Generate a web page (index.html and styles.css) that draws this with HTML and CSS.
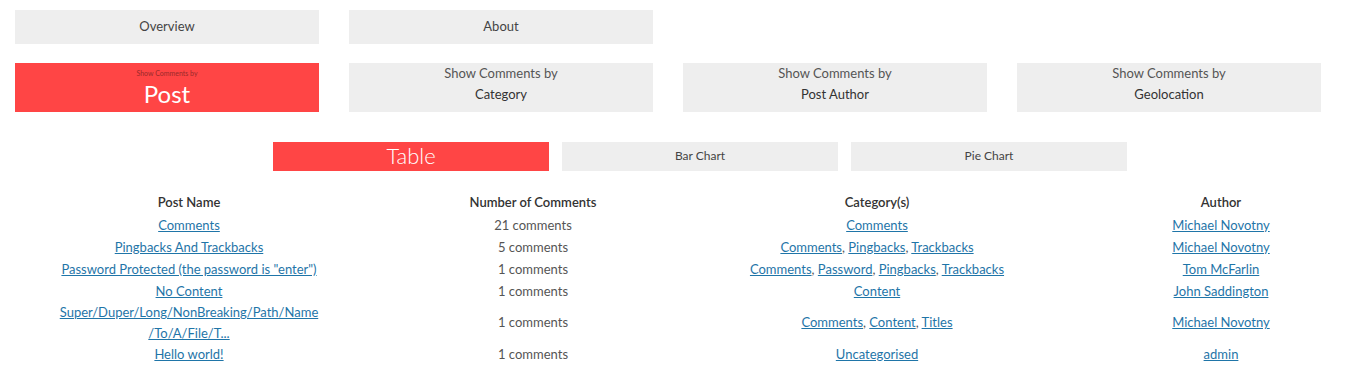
FILE: index.html
```html
<!DOCTYPE html>
<html lang="en">
<head>
    <meta charset="UTF-8">
    <title>Comments by Post</title>
    <link rel="stylesheet" href="styles.css">
</head>
<body>
    <div class="page">
        <div class="tabs tabs-main">
            <a class="tab">Overview</a>
            <a class="tab">About</a>
        </div>

        <div class="tabs tabs-by">
            <a class="tab active"><span class="pre">Show Comments by</span><span class="name">Post</span></a>
            <a class="tab"><span class="pre">Show Comments by</span><span class="name">Category</span></a>
            <a class="tab"><span class="pre">Show Comments by</span><span class="name">Post Author</span></a>
            <a class="tab"><span class="pre">Show Comments by</span><span class="name">Geolocation</span></a>
        </div>

        <div class="views">
            <a class="view active">Table</a>
            <a class="view">Bar Chart</a>
            <a class="view">Pie Chart</a>
        </div>

        <table class="stats">
            <thead>
                <tr>
                    <th>Post Name</th>
                    <th>Number of Comments</th>
                    <th>Category(s)</th>
                    <th>Author</th>
                </tr>
            </thead>
            <tbody>
                <tr>
                    <td><a href="#">Comments</a></td>
                    <td>21 comments</td>
                    <td><a href="#">Comments</a></td>
                    <td><a href="#">Michael Novotny</a></td>
                </tr>
                <tr>
                    <td><a href="#">Pingbacks And Trackbacks</a></td>
                    <td>5 comments</td>
                    <td><a href="#">Comments</a>, <a href="#">Pingbacks</a>, <a href="#">Trackbacks</a></td>
                    <td><a href="#">Michael Novotny</a></td>
                </tr>
                <tr>
                    <td><a href="#">Password Protected (the password is "enter")</a></td>
                    <td>1 comments</td>
                    <td><a href="#">Comments</a>, <a href="#">Password</a>, <a href="#">Pingbacks</a>, <a href="#">Trackbacks</a></td>
                    <td><a href="#">Tom McFarlin</a></td>
                </tr>
                <tr>
                    <td><a href="#">No Content</a></td>
                    <td>1 comments</td>
                    <td><a href="#">Content</a></td>
                    <td><a href="#">John Saddington</a></td>
                </tr>
                <tr class="wrap">
                    <td><a href="#">Super/Duper/Long/NonBreaking/Path/Name<br>/To/A/File/T...</a></td>
                    <td>1 comments</td>
                    <td><a href="#">Comments</a>, <a href="#">Content</a>, <a href="#">Titles</a></td>
                    <td><a href="#">Michael Novotny</a></td>
                </tr>
                <tr>
                    <td><a href="#">Hello world!</a></td>
                    <td>1 comments</td>
                    <td><a href="#">Uncategorised</a></td>
                    <td><a href="#">admin</a></td>
                </tr>
            </tbody>
        </table>
    </div>
</body>
</html>
```

FILE: styles.css
```css
html, body {
    overflow: hidden;
}
body {
    margin: 0;
    font-family: Lato, 'Liberation Sans', sans-serif;
    font-size: 13px;
    color: #555;
    background: #fff;
}
.page {
    padding: 10px 0 0 15px;
}
.tabs {
    display: flex;
    gap: 30px;
}
.tab {
    width: 304px;
    background: #eee;
    color: #444;
    text-align: center;
    display: flex;
    flex-direction: column;
}
.tabs-main .tab {
    height: 34px;
    line-height: 32px;
}
.tabs-by {
    margin-top: 19px;
}
.tabs-by .tab {
    height: 49px;
    line-height: 21px;
}
.tabs-by .pre {
    color: #555;
}
.tabs-by .name {
    color: #333;
}
.tab.active {
    background: #ff4545;
}
.tab.active .pre {
    font-size: 7px;
    line-height: 10px;
    color: #9a2a2a;
    margin-top: 5px;
}
.tab.active .name {
    font-size: 24px;
    line-height: 32px;
    color: #fff;
}
.views {
    display: flex;
    gap: 13px;
    margin: 30px 0 0 258px;
}
.view {
    width: 276px;
    height: 29px;
    line-height: 27px;
    background: #eee;
    color: #444;
    font-size: 12px;
    text-align: center;
}
.view.active {
    background: #ff4545;
    color: #fff;
    font-size: 22px;
    font-weight: 300;
}
.stats {
    border-collapse: collapse;
    table-layout: fixed;
    width: 1376px;
    margin: 20px 0 0 2px;
}
.stats th,
.stats td {
    width: 344px;
    padding: 0.5px 0;
    line-height: 21px;
    text-align: center;
    vertical-align: middle;
}
.stats th {
    color: #333;
    font-weight: 600;
    padding-bottom: 1.5px;
}
.stats .wrap td {
    padding: 0;
    line-height: 20.5px;
}
.stats a {
    color: #1f75a8;
    text-decoration: underline;
}
```
